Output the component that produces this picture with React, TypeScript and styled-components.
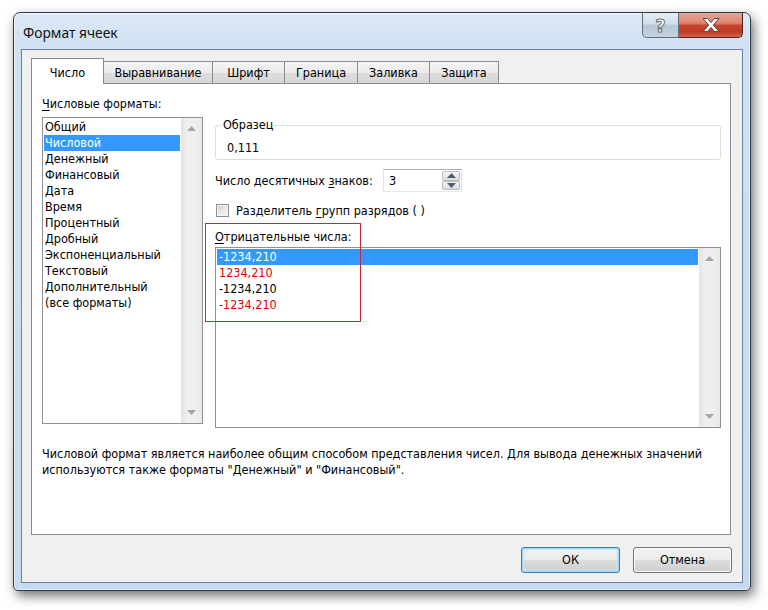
import React from 'react';
import styled, { createGlobalStyle } from 'styled-components';

const Global = createGlobalStyle`
  html, body { margin: 0; padding: 0; background: #fff; }
  body {
    font-family: "DejaVu Sans Condensed", "DejaVu Sans", sans-serif;
    font-size: 12.5px;
    color: #000;
  }
  #root { width: 768px; height: 610px; overflow: hidden; }
`;

const Stage = styled.div`
  box-sizing: border-box;
  width: 768px;
  height: 610px;
  padding: 12px 0 0 13px;
`;

const Window = styled.div`
  box-sizing: border-box;
  width: 738px;
  height: 579px;
  border: 1px solid #2e3946;
  border-radius: 7px 7px 5px 5px;
  padding: 0 7px 7px 7px;
  background: linear-gradient(180deg, #dde9f6 0px, #cfe0f3 36px, #c6dbf1 100%);
  box-shadow: 3px 5px 12px rgba(0, 0, 0, 0.55), inset 0 0 0 1px rgba(255, 255, 255, 0.55);
  display: flex;
  flex-direction: column;
`;

const TitleBar = styled.div`
  height: 36px;
  display: flex;
  align-items: flex-start;
  justify-content: space-between;
`;

const Title = styled.div`
  font-family: "Noto Sans", "Open Sans", sans-serif;
  font-size: 13.8px;
  line-height: 20px;
  color: #111;
  margin: 10px 0 0 2px;
`;

const CaptionButtons = styled.div`
  display: flex;
`;

const HelpButton = styled.div`
  box-sizing: border-box;
  width: 37px;
  height: 25px;
  border: 1px solid #5f6d7d;
  border-top: none;
  border-radius: 0 0 0 5px;
  background: linear-gradient(180deg, #e6edf4 0%, #d3dde8 45%, #b9c7d6 52%, #c3d0dd 100%);
  display: flex;
  align-items: center;
  justify-content: center;
`;

const HelpGlyph = styled.span`
  font-family: "DejaVu Sans", sans-serif;
  font-weight: bold;
  font-size: 18px;
  line-height: 20px;
  color: #fff;
  -webkit-text-stroke: 1px #6b717a;
  margin-top: 1px;
`;

const CloseButton = styled.div`
  box-sizing: border-box;
  width: 64px;
  height: 25px;
  border: 1px solid #4e2722;
  border-top: none;
  border-left: none;
  border-radius: 0 0 5px 0;
  background: linear-gradient(180deg, #e8a696 0%, #dc8572 42%, #c9442d 52%, #c03a24 78%, #d2644c 100%);
  display: flex;
  align-items: center;
  justify-content: center;
`;

const Client = styled.div`
  box-sizing: border-box;
  height: 534px;
  border: 1px solid #6f8197;
  background: #f0f0f0;
  padding: 8px 11px 9px 9px;
  display: flex;
  flex-direction: column;
`;

const TabRow = styled.div`
  height: 25px;
  display: flex;
  align-items: flex-end;
  position: relative;
  z-index: 1;
`;

const Tab = styled.div<{ $w: number; $active?: boolean }>`
  box-sizing: border-box;
  width: ${p => p.$w}px;
  height: ${p => (p.$active ? 26 : 22)}px;
  margin-left: -1px;
  margin-bottom: ${p => (p.$active ? -1 : 0)}px;
  &:first-child { margin-left: 0; }
  border: 1px solid #898c95;
  border-bottom: none;
  padding-top: ${p => (p.$active ? 3 : 1)}px;
  line-height: 16px;
  display: flex;
  justify-content: center;
  align-items: center;
  background: ${p =>
    p.$active ? '#fff' : 'linear-gradient(180deg, #f4f4f4 0%, #ebebeb 50%, #dedede 52%, #d6d6d6 100%)'};
  position: relative;
  z-index: ${p => (p.$active ? 2 : 1)};
`;

const Panel = styled.div`
  box-sizing: border-box;
  height: 452px;
  border: 1px solid #898c95;
  background: #fff;
  padding: 12px 9px 0 10px;
  position: relative;
`;

const PanelGrid = styled.div`
  display: grid;
  grid-template-columns: 161px 1fr;
  column-gap: 12px;
`;

const Column = styled.div<{ $top?: number }>`
  display: flex;
  flex-direction: column;
  padding-top: ${p => p.$top ?? 0}px;
`;

const Label = styled.div<{ $mt?: number }>`
  line-height: 16px;
  height: 16px;
  margin-top: ${p => p.$mt ?? 0}px;
  white-space: nowrap;
`;

const Key = styled.span`
  text-decoration: underline;
  text-underline-offset: 2px;
`;

const ListBox = styled.div<{ $h: number; $mt?: number }>`
  box-sizing: border-box;
  height: ${p => p.$h}px;
  margin-top: ${p => p.$mt ?? 0}px;
  border: 1px solid #8f9196;
  background: #fff;
  display: flex;
`;

const ListItems = styled.div`
  flex: 1;
  padding-top: 1px;
  min-width: 0;
`;

const ListItem = styled.div<{ $selected?: boolean; $color?: string; $pad?: number }>`
  height: 16px;
  line-height: 16px;
  margin: 0 1px;
  padding-left: ${p => p.$pad ?? 1}px;
  white-space: nowrap;
  color: ${p => (p.$selected ? '#fff' : p.$color ?? '#000')};
  background: ${p => (p.$selected ? '#3399ff' : 'transparent')};
`;

const ScrollBar = styled.div`
  width: 21px;
  flex: none;
  background: linear-gradient(90deg, #e4e4e4 0%, #efefef 30%, #efefef 70%, #e8e8e8 100%);
  display: flex;
  flex-direction: column;
  justify-content: space-between;
`;

const ScrollArrow = styled.div`
  width: 21px;
  height: 21px;
  display: flex;
  align-items: center;
  justify-content: center;
`;

const GroupBox = styled.fieldset`
  margin: 0;
  padding: 7px 6px 3px 11px;
  border: 1px solid #d5dfe5;
  border-radius: 3px;
  min-width: 0;
`;

const Legend = styled.legend`
  padding: 0 1px;
  margin-left: -5px;
  line-height: 16px;
`;

const SampleValue = styled.div`
  line-height: 16px;
  height: 16px;
`;

const SpinRow = styled.div`
  margin-top: 9px;
  display: grid;
  grid-template-columns: 168px 79px;
  align-items: center;
  height: 23px;
`;

const SpinBox = styled.div`
  box-sizing: border-box;
  height: 23px;
  border: 1px solid #abadb3;
  border-left-color: #e2e3ea;
  border-right-color: #dbdfe6;
  border-bottom-color: #e3e9ef;
  background: #fff;
  display: flex;
  align-items: center;
  justify-content: space-between;
  padding: 0 1px 0 5px;
`;

const SpinButtons = styled.div`
  display: flex;
  flex-direction: column;
  width: 18px;
  height: 19px;
`;

const SpinButton = styled.div`
  box-sizing: border-box;
  flex: 1;
  border: 1px solid #b7bcc4;
  border-radius: 2px;
  background: linear-gradient(180deg, #f6f6f6 0%, #e8e8e8 50%, #dcdcdc 100%);
  display: flex;
  align-items: center;
  justify-content: center;
`;

const CheckRow = styled.div`
  margin-top: 10px;
  height: 16px;
  display: flex;
  align-items: center;
  gap: 7px;
  padding-left: 1px;
`;

const CheckBox = styled.div`
  box-sizing: border-box;
  width: 13px;
  height: 13px;
  border: 1px solid #8e8f8f;
  background: linear-gradient(135deg, #cfcfcf 0%, #e4e4e4 45%, #f8f8f8 100%);
  box-shadow: inset 0 0 0 1px #f4f4f4;
`;

const Annotation = styled.div`
  position: absolute;
  box-sizing: border-box;
  left: 173px;
  top: 139px;
  width: 156px;
  height: 99px;
  border: 1px solid #c22a30;
  pointer-events: none;
`;

const Description = styled.div`
  margin-top: 18px;
  line-height: 16px;
  white-space: nowrap;
`;

const ButtonRow = styled.div`
  margin-top: 12px;
  margin-right: -1px;
  display: flex;
  justify-content: flex-end;
  gap: 13px;
`;

const DialogButton = styled.div<{ $default?: boolean }>`
  box-sizing: border-box;
  width: 99px;
  height: 26px;
  border: 1px solid ${p => (p.$default ? '#3c7fb1' : '#707070')};
  border-radius: 3px;
  background: linear-gradient(180deg, #f2f2f2 0%, #ebebeb 49%, #dddddd 51%, #cfcfcf 100%);
  box-shadow: ${p => (p.$default ? 'inset 0 0 0 1px #9fd5f3, inset 0 0 2px 2px #c5e6f8' : 'inset 0 0 0 1px #fcfcfc')};
  display: flex;
  align-items: center;
  justify-content: center;
  line-height: 16px;
`;

const UpArrow = ({ color = '#a6a6a6' }: { color?: string }) => (
  <svg width="9" height="5" viewBox="0 0 9 5">
    <polygon points="0,5 9,5 4.5,0" fill={color} />
  </svg>
);

const DownArrow = ({ color = '#a6a6a6' }: { color?: string }) => (
  <svg width="9" height="5" viewBox="0 0 9 5">
    <polygon points="0,0 9,0 4.5,5" fill={color} />
  </svg>
);

const CloseX = () => (
  <svg width="20" height="16" viewBox="0 0 20 16">
    <polygon
      points="2,1.5 6.5,1.5 10,5.5 13.5,1.5 18,1.5 12.3,8 18,14.5 13.5,14.5 10,10.5 6.5,14.5 2,14.5 7.7,8"
      fill="#fff"
      stroke="#4b4b4b"
      strokeWidth="1"
      strokeLinejoin="round"
    />
  </svg>
);

const Scroll = () => (
  <ScrollBar>
    <ScrollArrow>
      <UpArrow />
    </ScrollArrow>
    <ScrollArrow>
      <DownArrow />
    </ScrollArrow>
  </ScrollBar>
);

const tabs: { label: string; w: number }[] = [
  { label: 'Число', w: 73 },
  { label: 'Выравнивание', w: 110 },
  { label: 'Шрифт', w: 73 },
  { label: 'Граница', w: 74 },
  { label: 'Заливка', w: 73 },
  { label: 'Защита', w: 70 },
];

const formats = [
  'Общий',
  'Числовой',
  'Денежный',
  'Финансовый',
  'Дата',
  'Время',
  'Процентный',
  'Дробный',
  'Экспоненциальный',
  'Текстовый',
  'Дополнительный',
  '(все форматы)',
];

const negatives: { text: string; color: string }[] = [
  { text: '-1234,210', color: '#000' },
  { text: '1234,210', color: '#e00000' },
  { text: '-1234,210', color: '#000' },
  { text: '-1234,210', color: '#e00000' },
];

export default function App() {
  return (
    <>
      <Global />
      <Stage>
        <Window>
          <TitleBar>
            <Title>Формат ячеек</Title>
            <CaptionButtons>
              <HelpButton>
                <HelpGlyph>?</HelpGlyph>
              </HelpButton>
              <CloseButton>
                <CloseX />
              </CloseButton>
            </CaptionButtons>
          </TitleBar>
          <Client>
            <TabRow>
              {tabs.map((t, i) => (
                <Tab key={t.label} $w={t.w} $active={i === 0}>
                  {t.label}
                </Tab>
              ))}
            </TabRow>
            <Panel>
              <PanelGrid>
                <Column>
                  <Label>
                    <Key>Ч</Key>исловые форматы:
                  </Label>
                  <ListBox $h={307} $mt={5}>
                    <ListItems>
                      {formats.map((f, i) => (
                        <ListItem key={f} $selected={i === 1}>
                          {f}
                        </ListItem>
                      ))}
                    </ListItems>
                    <Scroll />
                  </ListBox>
                </Column>
                <Column $top={21}>
                  <GroupBox>
                    <Legend>Образец</Legend>
                    <SampleValue>0,111</SampleValue>
                  </GroupBox>
                  <SpinRow>
                    <Label>
                      Число десятичных <Key>з</Key>наков:
                    </Label>
                    <SpinBox>
                      <span>3</span>
                      <SpinButtons>
                        <SpinButton>
                          <UpArrow color="#4d5d73" />
                        </SpinButton>
                        <SpinButton>
                          <DownArrow color="#4d5d73" />
                        </SpinButton>
                      </SpinButtons>
                    </SpinBox>
                  </SpinRow>
                  <CheckRow>
                    <CheckBox />
                    <span>
                      Разделитель <Key>г</Key>рупп разрядов ( )
                    </span>
                  </CheckRow>
                  <Label $mt={11}>
                    <Key>О</Key>трицательные числа:
                  </Label>
                  <ListBox $h={181} $mt={2}>
                    <ListItems>
                      {negatives.map((n, i) => (
                        <ListItem key={i} $selected={i === 0} $color={n.color} $pad={2}>
                          {n.text}
                        </ListItem>
                      ))}
                    </ListItems>
                    <Scroll />
                  </ListBox>
                </Column>
              </PanelGrid>
              <Description>
                Числовой формат является наиболее общим способом представления чисел. Для вывода денежных значений
                <br />
                используются также форматы "Денежный" и "Финансовый".
              </Description>
              <Annotation />
            </Panel>
            <ButtonRow>
              <DialogButton $default>ОК</DialogButton>
              <DialogButton>Отмена</DialogButton>
            </ButtonRow>
          </Client>
        </Window>
      </Stage>
    </>
  );
}
